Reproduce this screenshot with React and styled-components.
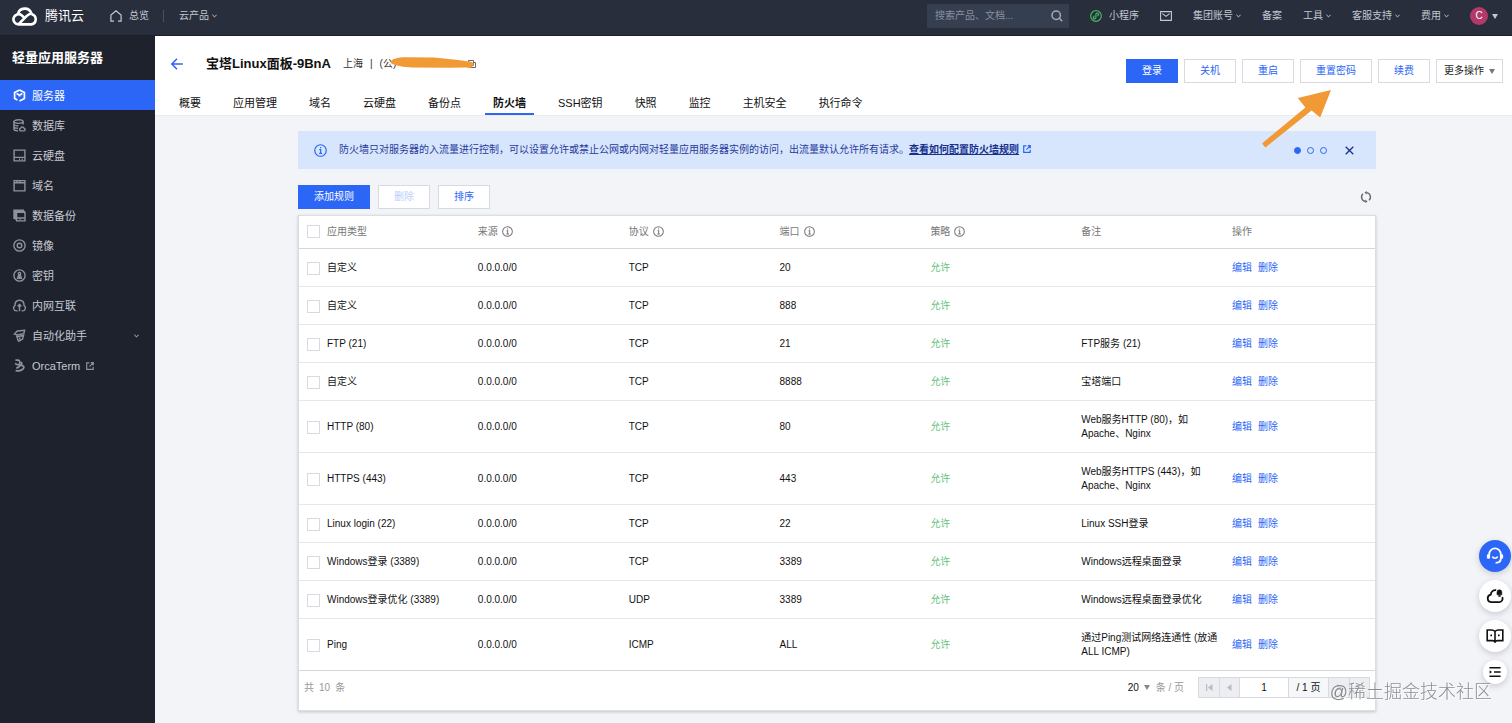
import React from "react";
import styled, { createGlobalStyle } from "styled-components";

const menu = [
  { name: "服务器", icon: "server", active: true },
  { name: "数据库", icon: "database" },
  { name: "云硬盘", icon: "disk" },
  { name: "域名", icon: "domain" },
  { name: "数据备份", icon: "backup" },
  { name: "镜像", icon: "image" },
  { name: "密钥", icon: "key" },
  { name: "内网互联", icon: "network" },
  { name: "自动化助手", icon: "robot", expandable: true },
  { name: "OrcaTerm", icon: "orca", external: true },
];

const tabs = [
  "概要",
  "应用管理",
  "域名",
  "云硬盘",
  "备份点",
  "防火墙",
  "SSH密钥",
  "快照",
  "监控",
  "主机安全",
  "执行命令",
];

const columns = [
  { title: "应用类型" },
  { title: "来源", tip: true },
  { title: "协议", tip: true },
  { title: "端口", tip: true },
  { title: "策略", tip: true },
  { title: "备注" },
  { title: "操作" },
];

const rules = [
  { type: "自定义", protocol: "TCP", port: "20", note: "" },
  { type: "自定义", protocol: "TCP", port: "888", note: "" },
  { type: "FTP (21)", protocol: "TCP", port: "21", note: "FTP服务 (21)" },
  { type: "自定义", protocol: "TCP", port: "8888", note: "宝塔端口" },
  {
    type: "HTTP (80)",
    protocol: "TCP",
    port: "80",
    note: "Web服务HTTP (80)，如 Apache、Nginx",
  },
  {
    type: "HTTPS (443)",
    protocol: "TCP",
    port: "443",
    note: "Web服务HTTPS (443)，如 Apache、Nginx",
  },
  { type: "Linux login (22)", protocol: "TCP", port: "22", note: "Linux SSH登录" },
  {
    type: "Windows登录 (3389)",
    protocol: "TCP",
    port: "3389",
    note: "Windows远程桌面登录",
  },
  {
    type: "Windows登录优化 (3389)",
    protocol: "UDP",
    port: "3389",
    note: "Windows远程桌面登录优化",
  },
  {
    type: "Ping",
    protocol: "ICMP",
    port: "ALL",
    note: "通过Ping测试网络连通性 (放通ALL ICMP)",
  },
];

const menuIcons = {
  server: (
    <>
      <path d="M6.5 .9 11.4 3.6V9.4L8.6 11M4.4 11 1.6 9.4V3.6L6.5 .9" strokeWidth="1.7" />
      <path d="M3.6 4.6 6.5 6.3 9.4 4.6M6.5 6.3V7.6M6.4 12.1 8.9 10.8" strokeWidth="1.7" />
    </>
  ),
  database: (
    <>
      <ellipse cx="5.5" cy="2.6" rx="4.6" ry="1.8" />
      <path d="M.9 2.6V10C.9 11 3 11.8 5 11.8M10.1 2.6V5.6M.9 5C.9 6 3 6.9 5.5 6.9M.9 7.6C.9 8.6 3 9.3 5 9.3" />
      <path d="M7.5 11.9A1.4 1.4 0 0 1 7.6 9.2 1.8 1.8 0 0 1 11 9.2 1.4 1.4 0 0 1 11.2 11.9Z" />
    </>
  ),
  disk: <path d="M1.1 1.1H11.9V11.9H1.1ZM1.1 8.4H11.9M6 10.2H7M8.6 10.2H9.8" />,
  domain: <path d="M1.1 1.6H11.9V11.9H1.1ZM1.1 3.8H11.9M4 1.6V3.8M7 1.6V3.8" />,
  backup: (
    <path d="M1 10V1.2H11M3.6 3.4H12V11.9H3.6ZM3.6 9H12M6.6 10.4H7.6M2.4 10.8V2.4H12" />
  ),
  image: (
    <>
      <circle cx="6.5" cy="6.5" r="5.6" />
      <circle cx="6.5" cy="6.5" r="2.3" />
    </>
  ),
  key: (
    <>
      <circle cx="6.5" cy="6.5" r="5.6" />
      <circle cx="6.5" cy="4.6" r="1.2" />
      <path d="M5.8 5.8 4.6 9.3H8.4L7.2 5.8M6.5 6V9" />
    </>
  ),
  network: (
    <>
      <path d="M4.6 11.9H3.6A2.9 2.9 0 0 1 1.9 6.6C1.9 3.4 3.8 1.2 6.5 1.2S11.1 3.4 11.1 6.6A2.9 2.9 0 0 1 9.4 11.9H8.6" />
      <path d="M6.5 12.2V6M4.7 7.4 6.5 5.6 8.3 7.4" strokeWidth="1.5" />
    </>
  ),
  robot: (
    <>
      <path d="M1.4 5 4.4 2 11.6 1.2 10.8 4.6 4.2 6ZM4.2 6 3.6 8.4" />
      <path d="M4.4 7.8 10.6 6.2 9.6 10 5.8 12.2 4.6 10.4ZM6.8 8.6V10.4" />
    </>
  ),
  orca: (
    <path
      d="M2.4 1.2H5C6.8 1.4 7.4 3.2 6.2 5.4M2 4.4C3.6 5.8 5.4 6.2 7.2 6.2 9 5.8 9 4 8.2 3M7.2 6.2C10 6.2 11.4 7.4 10.6 9.2 9.6 11.4 6.4 12.2 2.6 11.6M3.2 8.8C5.2 9 6.4 8 7.2 6.2"
      strokeWidth="1.7"
    />
  ),
};

const Chevron = () => (
  <svg width="5" height="4" viewBox="0 0 5 4" fill="none" stroke="currentColor" aria-hidden="true">
    <path d="M.4 .8 2.5 2.9 4.6 .8" />
  </svg>
);

const Caret = () => (
  <svg width="6" height="5" viewBox="0 0 6 5" fill="currentColor" aria-hidden="true">
    <path d="M0 0H6L3 5Z" />
  </svg>
);

const InfoIcon = ({ size }) => (
  <svg width={size} height={size} viewBox="0 0 12 12" fill="none" stroke="currentColor" aria-hidden="true">
    <circle cx="6" cy="6" r="5.3" strokeWidth="1.1" />
    <path d="M4.9 5.2H6.2V8.6M4.7 8.7H7.5M5.5 3.4H6.7" strokeWidth="1.1" />
  </svg>
);

const ExternalIcon = () => (
  <svg width="8" height="8" viewBox="0 0 8 8" fill="none" stroke="currentColor" strokeWidth="1.2" aria-hidden="true">
    <path d="M3.4 .8H.7V7.3H7.2V4.8M4.8 .7H7.3V3.2M7.1 .9 3.4 4.6" />
  </svg>
);

const App = () => {
  return (
    <>
      <GlobalStyle />
      <TopBar>
        <Logo href="#">
          <svg width="26" height="19" viewBox="0 0 26 19" fill="none" stroke="#fff" strokeWidth="2.6" aria-hidden="true">
            <path d="M19.6 7.2A5.2 5.2 0 0 1 19.4 17.4H6.6A5.1 5.1 0 1 1 9.6 8.2L12.2 10.4" />
            <path d="M5.9 7.2A7 7 0 0 1 19.4 6.4C17.4 6.8 16.2 7.6 14.8 8.9L6.6 17.2" />
          </svg>
          腾讯云
        </Logo>
        <NavLink href="#">
          <svg width="12" height="12" viewBox="0 0 12 12" fill="none" stroke="currentColor" strokeWidth="1.2" aria-hidden="true">
            <path d="M4 11.2H.9V5.1L6 .8 11.1 5.1V11.2H8" />
          </svg>
          总览
        </NavLink>
        <Divider />
        <TopItem>
          云产品
          <Chevron />
        </TopItem>
        <TopRight>
          <Search>
            <input type="text" aria-label="搜索" placeholder="搜索产品、文档..." />
            <svg width="12" height="12" viewBox="0 0 12 12" fill="none" stroke="#a4abb8" strokeWidth="1.5" aria-hidden="true">
              <circle cx="5.2" cy="5.2" r="4.2" />
              <path d="M8.3 8.3 11.2 11.2" />
            </svg>
          </Search>
          <MiniApp href="#">
            <svg width="12" height="12" viewBox="0 0 12 12" fill="none" stroke="#45b75c" strokeWidth="1.2" aria-hidden="true">
              <circle cx="6" cy="6" r="5.3" />
              <path d="M4.6 6.2A1.3 1.3 0 1 0 5.9 7.6V4.4A1.3 1.3 0 1 1 7.4 5.8" />
            </svg>
            小程序
          </MiniApp>
          <TopItem aria-label="消息">
            <svg width="12" height="10" viewBox="0 0 12 10" fill="none" stroke="currentColor" strokeWidth="1.1" aria-hidden="true">
              <path d="M.6 .6H11.4V9.4H.6ZM2.4 2.6 6 5.4 9.6 2.6" />
            </svg>
          </TopItem>
          <TopItem>
            集团账号
            <Chevron />
          </TopItem>
          <TopItem>备案</TopItem>
          <TopItem>
            工具
            <Chevron />
          </TopItem>
          <TopItem>
            客服支持
            <Chevron />
          </TopItem>
          <TopItem>
            费用
            <Chevron />
          </TopItem>
          <TopItem>
            <Avatar>C</Avatar>
            <Caret />
          </TopItem>
        </TopRight>
      </TopBar>

      <Body>
        <Sidebar>
          <SidebarTitle>轻量应用服务器</SidebarTitle>
          {menu.map((m) => (
            <MenuItem href="#" key={m.name} $active={m.active}>
              <svg width="13" height="13" viewBox="0 0 13 13" fill="none" stroke="currentColor" strokeWidth="1.4" aria-hidden="true">
                {menuIcons[m.icon]}
              </svg>
              <span>{m.name}</span>
              {m.external && <ExternalIcon />}
              {m.expandable && (
                <MenuArrow>
                  <Chevron />
                </MenuArrow>
              )}
            </MenuItem>
          ))}
        </Sidebar>

        <Main>
          <Header>
            <HeaderLeft>
              <TitleRow>
                <BackButton aria-label="返回">
                  <svg width="12" height="12" viewBox="0 0 12 12" fill="none" stroke="currentColor" strokeWidth="1.5" aria-hidden="true">
                    <path d="M6 .8 .9 6 6 11.2M1 6H11.8" />
                  </svg>
                </BackButton>
                <h1>宝塔Linux面板-9BnA</h1>
                <Location>
                  上海<i>|</i>(公)
                  <HiddenIp>
                    <CopyButton aria-label="复制">
                      <svg width="8" height="8" viewBox="0 0 8 8" fill="none" stroke="#666" aria-hidden="true">
                        <path d="M.5 .5H5.5V5.5H.5ZM5.5 2.5H7.5V7.5H2.5V5.5" />
                      </svg>
                    </CopyButton>
                    <Scribble width="86" height="14" viewBox="0 0 86 14" aria-hidden="true">
                      <path
                        d="M1 5C4 2 10 .8 18 1.2L44 1.6 66 3.8 79 5.4C83 6 84.4 7.4 83.4 9.6 82 12.4 79 12.2 76 11.4L60 11.8 22 11.4C13 11.2 7 9.4 3 8.2 .8 7.4 0 6.2 1 5Z"
                        fill="#f19a35"
                      />
                    </Scribble>
                  </HiddenIp>
                </Location>
              </TitleRow>
              <Tabs>
                {tabs.map((t) => (
                  <Tab href="#" key={t} $active={t === "防火墙"}>
                    {t}
                  </Tab>
                ))}
              </Tabs>
            </HeaderLeft>
            <Actions>
              <Button $primary>登录</Button>
              <Button>关机</Button>
              <Button>重启</Button>
              <Button>重置密码</Button>
              <Button>续费</Button>
              <MoreButton>
                更多操作
                <Caret />
              </MoreButton>
              <Pointer width="70" height="58" viewBox="0 0 70 58" aria-hidden="true">
                <path d="M0 53.4 43.4 17.4 35.8 8 69 0 58.2 27.4 49.6 20.6 3.4 57.4Z" fill="#f19a35" />
              </Pointer>
            </Actions>
          </Header>

          <Content>
            <Notice>
              <InfoIcon size={13} />
              <p>
                防火墙只对服务器的入流量进行控制，可以设置允许或禁止公网或内网对轻量应用服务器实例的访问，出流量默认允许所有请求。
                <NoticeLink href="#">
                  <b>查看如何配置防火墙规则</b>
                  <ExternalIcon />
                </NoticeLink>
              </p>
              <Dots>
                <Dot aria-label="第1条" $active />
                <Dot aria-label="第2条" />
                <Dot aria-label="第3条" />
              </Dots>
              <CloseButton aria-label="关闭">
                <svg width="9" height="9" viewBox="0 0 9 9" fill="none" stroke="currentColor" strokeWidth="1.3" aria-hidden="true">
                  <path d="M.7 .7 8.3 8.3M8.3 .7 .7 8.3" />
                </svg>
              </CloseButton>
            </Notice>

            <Toolbar>
              <Button $primary>添加规则</Button>
              <Button disabled>删除</Button>
              <Button>排序</Button>
              <RefreshButton aria-label="刷新">
                <svg width="12" height="12" viewBox="0 0 12 12" fill="none" stroke="currentColor" strokeWidth="1.4" aria-hidden="true">
                  <path d="M5.4 10.4A4.4 4.4 0 0 1 3 2.8M6.6 1.6A4.4 4.4 0 0 1 9 9.2" />
                  <path d="M6.8 0V3.4L4.4 1.6ZM5.2 12V8.6L7.6 10.4Z" fill="currentColor" stroke="none" />
                </svg>
              </RefreshButton>
            </Toolbar>

            <Panel>
              <RuleTable>
                <colgroup>
                  <CheckCol />
                  {columns.map((c) => (
                    <col key={c.title} />
                  ))}
                </colgroup>
                <thead>
                  <tr>
                    <th>
                      <CheckBox type="checkbox" aria-label="全选" />
                    </th>
                    {columns.map((c) => (
                      <th key={c.title}>
                        <HeadCell>
                          {c.title}
                          {c.tip && <InfoIcon size={11} />}
                        </HeadCell>
                      </th>
                    ))}
                  </tr>
                </thead>
                <tbody>
                  {rules.map((r, i) => (
                    <tr key={i}>
                      <td>
                        <CheckBox type="checkbox" aria-label={r.type} />
                      </td>
                      <td>{r.type}</td>
                      <td>0.0.0.0/0</td>
                      <td>{r.protocol}</td>
                      <td>{r.port}</td>
                      <td>
                        <Allowed>允许</Allowed>
                      </td>
                      <td>{r.note}</td>
                      <td>
                        <Operations>
                          <a href="#">编辑</a>
                          <a href="#">删除</a>
                        </Operations>
                      </td>
                    </tr>
                  ))}
                </tbody>
              </RuleTable>
              <TableFooter>
                <Total>
                  <span>共</span>
                  <span>10</span>
                  <span>条</span>
                </Total>
                <PageSize>
                  <select aria-label="每页条数" defaultValue="20">
                    <option>20</option>
                  </select>
                  <Caret />
                  <span>条 / 页</span>
                </PageSize>
                <Pager>
                  <PageButton aria-label="首页" disabled>
                    <svg width="7" height="7" viewBox="0 0 7 7" fill="currentColor">
                      <path d="M0 0H1.2V7H0ZM6.5 0V7L2 3.5Z" />
                    </svg>
                  </PageButton>
                  <PageButton aria-label="上一页" disabled>
                    <svg width="5" height="7" viewBox="0 0 5 7" fill="currentColor">
                      <path d="M4.5 0V7L0 3.5Z" />
                    </svg>
                  </PageButton>
                  <PageInput type="text" aria-label="页码" defaultValue="1" />
                  <PageCount>/ 1 页</PageCount>
                  <PageButton aria-label="下一页" disabled>
                    <svg width="5" height="7" viewBox="0 0 5 7" fill="currentColor">
                      <path d="M.5 0V7L5 3.5Z" />
                    </svg>
                  </PageButton>
                  <PageButton aria-label="末页" disabled>
                    <svg width="7" height="7" viewBox="0 0 7 7" fill="currentColor">
                      <path d="M5.8 0H7V7H5.8ZM.5 0V7L5 3.5Z" />
                    </svg>
                  </PageButton>
                </Pager>
              </TableFooter>
            </Panel>
          </Content>
        </Main>
      </Body>

      <FloatMenu>
        <FloatButton aria-label="在线客服" $primary>
          <svg width="18" height="18" viewBox="0 0 18 18" fill="none" stroke="currentColor" strokeWidth="1.8" aria-hidden="true">
            <path d="M3.2 11.6V7.2A5.8 5.8 0 0 1 14.8 7.2V11.8C14.8 14.4 13 15.8 9.6 15.8" />
            <path d="M2 7.4V11.4M16 7.4V11.4" strokeWidth="2.2" />
            <path d="M6.4 9.6C7.2 11.8 10.8 11.8 11.6 9.6" strokeWidth="1.6" />
          </svg>
        </FloatButton>
        <FloatButton aria-label="云助手">
          <svg width="18" height="16" viewBox="0 0 18 16" fill="none" stroke="currentColor" strokeWidth="1.8" aria-hidden="true">
            <path d="M10.2 2.2A4.6 4.6 0 0 0 4.8 6.6 3.8 3.8 0 0 0 5 14.1H13.4A3.4 3.4 0 0 0 16.2 9.2" />
            <path d="M11 6.8V4.2A2.4 2.4 0 0 1 15.8 4.2V6.8ZM12.6 7.4H14.4V8.4H12.6Z" fill="currentColor" strokeWidth=".6" />
          </svg>
        </FloatButton>
        <FloatButton aria-label="文档">
          <svg width="18" height="14" viewBox="0 0 18 14" fill="none" stroke="currentColor" strokeWidth="1.6" aria-hidden="true">
            <path d="M9 2.4C8 1.2 7 1 5.6 1H1.2V11.6H6.4C7.8 11.6 8.6 12 9 13 9.4 12 10.2 11.6 11.6 11.6H16.8V1H12.4C11 1 10 1.2 9 2.4ZM9 2.4V12.4M4.4 6.4H6M12 6.4H13.6" />
          </svg>
        </FloatButton>
        <FloatButton aria-label="收起" $small>
          <svg width="12" height="10" viewBox="0 0 12 10" fill="none" stroke="currentColor" strokeWidth="1.5" aria-hidden="true">
            <path d="M.4 .8H11.6M5 5H11.6M.4 9.2H11.6" />
            <path d="M.6 3.2 3 5 .6 6.8Z" fill="currentColor" stroke="none" />
          </svg>
        </FloatButton>
      </FloatMenu>
      <Watermark>@稀土掘金技术社区</Watermark>
    </>
  );
};

const GlobalStyle = createGlobalStyle`
  * {
    box-sizing: border-box;
  }
  body {
    margin: 0;
    background: #f3f4f7;
    color: #111;
    font-family: "Liberation Sans", "Noto Sans CJK SC", sans-serif;
    font-size: 10px;
    line-height: 14px;
  }
  a {
    color: inherit;
    text-decoration: none;
  }
  button, input, select {
    margin: 0;
    padding: 0;
    border: 0;
    background: none;
    color: inherit;
    font: inherit;
  }
  svg {
    flex-shrink: 0;
  }
`;

const TopBar = styled.header`
  display: flex;
  align-items: center;
  height: 36px;
  padding: 0 14px 3px 12px;
  background: #282e3c;
  border-bottom: 1px solid #1a1e28;
  color: #c3c8d2;
`;

const Logo = styled.a`
  display: flex;
  align-items: center;
  gap: 7px;
  color: #fff;
  font-size: 13px;
`;

const NavLink = styled.a`
  display: flex;
  align-items: center;
  gap: 7px;
  margin-left: 26px;
`;

const Divider = styled.span`
  width: 1px;
  height: 12px;
  margin: 0 15px 0 14px;
  background: #4a5160;
`;

const TopItem = styled.button`
  display: flex;
  align-items: center;
  gap: 3px;
`;

const TopRight = styled.div`
  display: flex;
  align-items: center;
  gap: 21px;
  margin-left: auto;
`;

const Search = styled.label`
  display: flex;
  align-items: center;
  width: 142px;
  height: 24px;
  padding: 0 6px 0 8px;
  background: #363f50;

  input {
    flex: 1;
    min-width: 0;
    outline: none;
  }
  input::placeholder {
    color: #8890a0;
  }
`;

const MiniApp = styled.a`
  display: flex;
  align-items: center;
  gap: 7px;
`;

const Avatar = styled.span`
  width: 18px;
  height: 18px;
  margin-right: 1px;
  border-radius: 50%;
  background: #b2396a;
  color: #fff;
  line-height: 18px;
  text-align: center;
`;

const Body = styled.div`
  display: flex;
  min-height: calc(100vh - 36px);
`;

const Sidebar = styled.nav`
  flex: 0 0 155px;
  background: #1e222d;
  color: #b9bdc6;
`;

const SidebarTitle = styled.h2`
  margin: 0;
  padding-left: 12px;
  color: #fff;
  font-size: 13px;
  line-height: 44px;
`;

const MenuItem = styled.a`
  display: flex;
  align-items: center;
  gap: 6px;
  height: 30px;
  padding: 1px 16px 0 13px;
  background: ${(props) => (props.$active ? "#2b66f6" : "transparent")};
  color: ${(props) => (props.$active ? "#fff" : "#8d929d")};
  font-size: 11px;

  span {
    color: ${(props) => (props.$active ? "#fff" : "#c6c9d0")};
  }
`;

const MenuArrow = styled.span`
  display: flex;
  margin-left: auto;
`;

const Main = styled.main`
  flex: 1;
  min-width: 0;
`;

const Header = styled.div`
  display: flex;
  justify-content: space-between;
  padding: 0 9px 0 16px;
  background: #fff;
  box-shadow: 0 1px 0 #e9ebef;
`;

const HeaderLeft = styled.div`
  display: flex;
  flex-direction: column;
`;

const TitleRow = styled.div`
  display: flex;
  align-items: center;
  height: 55px;

  h1 {
    margin: 0 12px 0 23px;
    font-size: 13px;
    line-height: 18px;
  }
`;

const BackButton = styled.button`
  display: flex;
  color: #2b66f6;
`;

const Location = styled.div`
  display: flex;
  align-items: center;
  color: #333;

  i {
    margin: 0 7px;
    font-style: normal;
  }
`;

const HiddenIp = styled.span`
  position: relative;
  display: flex;
  justify-content: flex-end;
  width: 80px;
`;

const CopyButton = styled.button`
  display: flex;
`;

const Scribble = styled.svg`
  position: absolute;
  right: 0;
  bottom: -2px;
`;

const Tabs = styled.nav`
  display: flex;
  gap: 16px;
`;

const Tab = styled.a`
  height: 24px;
  padding: 1px 8px 0;
  border-bottom: 2px solid ${(props) => (props.$active ? "#2b66f6" : "transparent")};
  font-size: 11px;
  font-weight: ${(props) => (props.$active ? "bold" : "normal")};
  line-height: 22px;
  white-space: nowrap;
`;

const Actions = styled.div`
  position: relative;
  display: flex;
  align-items: flex-start;
  gap: 6px;
  padding-top: 23px;
`;

const Button = styled.button`
  height: 24px;
  padding: 0 15px;
  border: 1px solid ${(props) => (props.$primary ? "#2b66f6" : "#d7dae0")};
  background: ${(props) => (props.$primary ? "#2b66f6" : "#fff")};
  color: ${(props) => (props.$primary ? "#fff" : "#2b66f6")};
  white-space: nowrap;

  &:disabled {
    color: #bcd0fb;
  }
`;

const MoreButton = styled(Button)`
  display: flex;
  align-items: center;
  gap: 5px;
  padding: 0 7px;
  color: #222;

  svg {
    color: #777;
  }
`;

const Pointer = styled.svg`
  position: absolute;
  top: 54px;
  right: 171px;
`;

const Content = styled.div`
  max-width: 1093px;
  margin: 0 auto;
  padding: 16px 4px 12px 11px;
`;

const Notice = styled.div`
  display: flex;
  align-items: center;
  min-height: 38px;
  padding: 0 22px 0 16px;
  background: #d8e6fd;
  color: #2b66f6;

  p {
    flex: 1;
    margin: 0 0 0 12px;
    color: #263a9b;
  }
`;

const NoticeLink = styled.a`
  b {
    margin-right: 4px;
    color: #16308f;
    text-decoration: underline;
  }
  svg {
    color: #2b66f6;
  }
`;

const Dots = styled.div`
  display: flex;
  gap: 6px;
`;

const Dot = styled.button`
  width: 7px;
  height: 7px;
  border: 1px solid #2b66f6;
  border-radius: 50%;
  background: ${(props) => (props.$active ? "#2b66f6" : "transparent")};
`;

const CloseButton = styled.button`
  display: flex;
  margin-left: 18px;
  color: #17308f;
`;

const Toolbar = styled.div`
  display: flex;
  gap: 8px;
  padding: 16px 0 6px;
`;

const RefreshButton = styled.button`
  display: flex;
  align-items: center;
  margin: 0 4px 0 auto;
  color: #666;
`;

const Panel = styled.section`
  background: #fff;
  border: 1px solid #dcdee3;
  box-shadow: 0 1px 3px rgba(0, 0, 0, 0.2);
`;

const RuleTable = styled.table`
  width: 100%;
  border-collapse: collapse;
  table-layout: fixed;

  th,
  td {
    padding: 0 4px 0 8px;
    border-bottom: 1px solid #e5e7eb;
    text-align: left;
    vertical-align: middle;
  }
  th {
    height: 32px;
    border-color: #d5d7db;
    color: #777;
    font-weight: normal;
  }
  td {
    height: 38px;
    padding-top: 6px;
    padding-bottom: 4px;
  }
  td:nth-child(7) {
    padding: 12px 4px 11px 8px;
  }
  th:first-child,
  td:first-child {
    padding-right: 0;
  }
  tr:last-child td {
    border-color: #d5d7db;
  }
`;

const CheckCol = styled.col`
  width: 20px;
`;

const CheckBox = styled.input`
  display: block;
  width: 13px;
  height: 13px;
  appearance: none;
  border: 1px solid #d7dae0;
  background: #fff;
`;

const HeadCell = styled.div`
  display: flex;
  align-items: center;
  gap: 4px;
`;

const Allowed = styled.span`
  color: #5fc37c;
`;

const Operations = styled.div`
  display: flex;
  gap: 6px;
  color: #2b66f6;
`;

const TableFooter = styled.footer`
  display: flex;
  align-items: center;
  height: 39px;
  padding: 0 5px 5px;
`;

const Total = styled.div`
  display: flex;
  gap: 5px;
  color: #999;
`;

const PageSize = styled.div`
  display: flex;
  align-items: center;
  margin-left: auto;
  color: #888;

  select {
    margin-right: 4px;
    appearance: none;
    color: #111;
  }
  span {
    margin-left: 6px;
    color: #999;
  }
`;

const Pager = styled.div`
  display: flex;
  height: 21px;
  margin-left: 14px;
  border: 1px solid #d7dae0;
`;

const PageButton = styled.button`
  display: flex;
  align-items: center;
  justify-content: center;
  width: 20px;
  background: #eceef1;
  color: #b9bcc3;

  & + & {
    border-left: 1px solid #d7dae0;
  }
`;

const PageInput = styled.input`
  width: 50px;
  border: solid #d7dae0;
  border-width: 0 1px;
  text-align: center;
`;

const PageCount = styled.span`
  width: 40px;
  border-right: 1px solid #d7dae0;
  background: #f6f7f9;
  line-height: 19px;
  text-align: center;
`;

const FloatMenu = styled.aside`
  position: fixed;
  right: 1px;
  bottom: 39px;
  display: flex;
  flex-direction: column;
  align-items: center;
  gap: 8px;
`;

const FloatButton = styled.button`
  display: flex;
  align-items: center;
  justify-content: center;
  width: ${(props) => (props.$small ? 24 : 32)}px;
  height: ${(props) => (props.$small ? 24 : 32)}px;
  border-radius: 50%;
  background: ${(props) => (props.$primary ? "#2b66f6" : "#fff")};
  box-shadow: 0 2px 6px rgba(40, 50, 80, 0.22);
  color: ${(props) => (props.$primary ? "#fff" : "#111")};
`;

const Watermark = styled.div`
  position: fixed;
  right: 20px;
  bottom: 18px;
  color: #8b8d91;
  font-size: 18px;
  font-weight: 300;
  line-height: 26px;
  text-shadow: 1px 1px 0 rgba(255, 255, 255, 0.8);
  pointer-events: none;
`;

export default App;
